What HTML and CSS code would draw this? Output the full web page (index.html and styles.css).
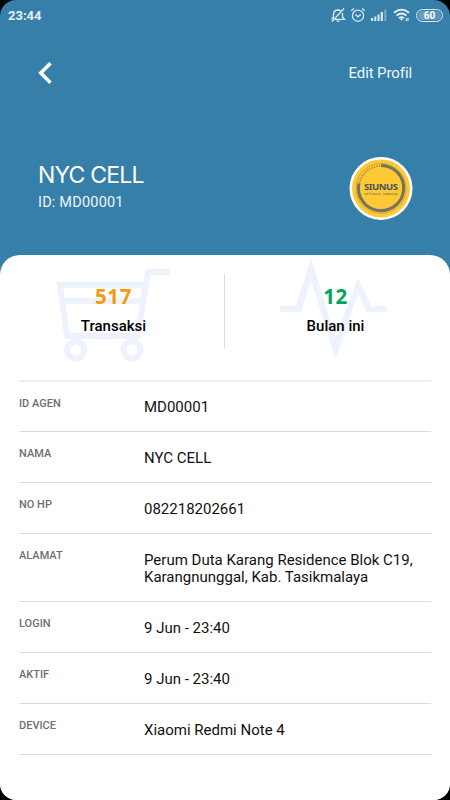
FILE: index.html
```html
<!DOCTYPE html>
<html lang="id">
<head>
  <meta charset="utf-8">
  <title>Profil</title>
  <link rel="stylesheet" href="styles.css">
</head>
<body>
  <div class="screen">
    <div class="header">
      <div class="statusbar">
        <span class="clock">23:44</span>
        <div class="status-icons">
          <svg class="bell" width="16" height="16" viewBox="0 0 16 16" fill="none" stroke="#dcebf4" stroke-width="1.3">
            <path d="M3.5 11.5 V7 Q3.7 3.2 8 3 Q9.5 3 10.7 4 M12.5 6 V10 L14.5 12.3 H5 M1.5 12.3 L3.5 10"/>
            <path d="M6.5 14.2 H9.5 M2 14.5 L14 1.5"/>
          </svg>
          <svg class="alarm" width="16" height="16" viewBox="0 0 16 16" fill="none" stroke="#dcebf4" stroke-width="1.3">
            <circle cx="8" cy="8.7" r="5.6"/>
            <path d="M5.3 7.5 L8 9.8 L10.8 7.5 M1.2 3.8 L4 1.6 M14.8 3.8 L12 1.6"/>
          </svg>
          <svg class="signal" width="16" height="14" viewBox="0 0 16 14">
            <path fill="#dcebf4" d="M0 10h2v3H0z M3.3 8.5h2V13h-2z M6.5 6.5h2V13h-2z M9.7 4h2.2v9H9.7z"/>
            <path fill="#79aac9" d="M13.3 1.5h2V13h-2z"/>
          </svg>
          <svg class="wifi" width="18" height="14" viewBox="0 0 18 14" fill="none" stroke="#e6f1f7" stroke-width="1.8">
            <path d="M1 4.8 Q8.5 -1.6 16 4.8 M3.5 7.6 Q8.5 3.4 13.5 7.6 M6 10.1 Q8.5 8.2 11 10.1"/>
            <path fill="#e6f1f7" stroke="none" d="M6.7 10.8 Q8.5 9.5 10.3 10.8 L8.5 12.8z"/>
            <path stroke-width="1" d="M13.3 10.2v3 M15 9.7v3.5"/>
          </svg>
          <span class="battery"><span>60</span></span>
        </div>
      </div>
      <div class="navbar">
        <svg width="16" height="24" viewBox="0 0 16 24" fill="none" stroke="#fff" stroke-width="3.6">
          <path d="M13.5 2.3 L3.8 12 L13.5 21.7"/>
        </svg>
        <span class="edit">Edit Profil</span>
      </div>
      <div class="profile">
        <div>
          <div class="name">NYC CELL</div>
          <div class="agent-id">ID: MD00001</div>
        </div>
        <svg class="avatar" width="64" height="64" viewBox="0 0 64 64">
          <circle cx="32" cy="32.4" r="31.5" fill="#fff"/>
          <circle cx="32" cy="32.4" r="29" fill="#ffc935"/>
          <circle cx="32" cy="32.4" r="25" fill="none" stroke="#ad984e" stroke-width=".7"/>
          <path d="M10.4 27 A22.2 22.2 0 0 1 32 9.8" fill="none" stroke="#8d8050" stroke-width="2" stroke-dasharray="1 1.5"/>
          <path d="M32 9.4 A22.6 22.6 0 1 1 9.9 27.5" fill="none" stroke="#77735a" stroke-width="3"/>
          <text class="logo-name" x="32" y="33.6" text-anchor="middle" textLength="34">SIUNUS</text>
          <text class="logo-sub" x="32" y="39.4" text-anchor="middle" textLength="34">Software Damasan</text>
        </svg>
      </div>
    </div>

    <div class="card">
      <div class="stats">
        <div class="stat">
          <svg class="stat-bg" width="114" height="94" viewBox="0 0 114 94" fill="none" stroke="#eef2fc" stroke-width="6">
            <path d="M114 4 H92 L81.5 68 H11 L4 17 H88 M6 33 H86"/>
            <circle cx="19.5" cy="82" r="8.5"/>
            <circle cx="76" cy="82" r="8.5"/>
          </svg>
          <div class="number orange">517</div>
          <div class="caption">Transaksi</div>
        </div>
        <div class="stat">
          <svg class="stat-bg pulse" width="107" height="102" viewBox="0 0 107 102">
            <path fill="#eef2fc" d="M0 48 H16 L31 0 L55.5 79 L78 20 L91 48 H106.500 V54 H86.500 L78 35 L55.500 101 L31 22 L21 54 H0z"/>
          </svg>
          <div class="number green">12</div>
          <div class="caption">Bulan ini</div>
        </div>
      </div>

      <div class="list">
        <div class="row">
          <div class="label">ID AGEN</div>
          <div class="value">MD00001</div>
        </div>
        <div class="row">
          <div class="label">NAMA</div>
          <div class="value">NYC CELL</div>
        </div>
        <div class="row">
          <div class="label">NO HP</div>
          <div class="value">082218202661</div>
        </div>
        <div class="row">
          <div class="label">ALAMAT</div>
          <div class="value">Perum Duta Karang Residence Blok C19,<br>Karangnunggal, Kab. Tasikmalaya</div>
        </div>
        <div class="row">
          <div class="label">LOGIN</div>
          <div class="value">9 Jun - 23:40</div>
        </div>
        <div class="row">
          <div class="label">AKTIF</div>
          <div class="value">9 Jun - 23:40</div>
        </div>
        <div class="row">
          <div class="label">DEVICE</div>
          <div class="value">Xiaomi Redmi Note 4</div>
        </div>
      </div>
    </div>
  </div>
</body>
</html>
```
FILE: styles.css
```css
* {
  box-sizing: border-box;
}

body {
  margin: 0;
  background: #000;
  font-family: Roboto, sans-serif;
}

.screen {
  width: 450px;
  height: 800px;
  background: #367fa9;
  border-radius: 16px;
  overflow: hidden;
  display: flex;
  flex-direction: column;
}

.header {
  height: 255px;
  color: #fff;
}

.statusbar {
  height: 30px;
  padding: 0 7px 0 8px;
  display: flex;
  align-items: center;
  justify-content: space-between;
}

.clock {
  font-size: 13px;
  font-weight: 700;
  color: #e6f1f7;
}

.status-icons {
  display: flex;
  align-items: center;
}

.alarm {
  margin-left: 4px;
}

.signal {
  margin-left: 5px;
}

.wifi {
  margin-left: 6px;
}

.battery {
  width: 27px;
  height: 13px;
  margin-left: 5px;
  padding: 1px;
  border: 1px solid #dcebf4;
  border-radius: 7px;
  font-size: 10px;
  font-weight: 700;
  line-height: 9px;
  text-align: center;
}

.battery span {
  display: block;
  border-radius: 5px;
  background: linear-gradient(to right, #67a0c0 60%, #5b97ba 60%);
}

.navbar {
  height: 86px;
  padding: 0 38px 0 37px;
  display: flex;
  align-items: center;
  justify-content: space-between;
}

.edit {
  font-size: 15px;
  letter-spacing: -0.1px;
  color: #eef6fa;
}

.profile {
  padding: 40px 37px 0 38px;
  display: flex;
  justify-content: space-between;
}

.name {
  margin-top: 5px;
  font-family: Inter, sans-serif;
  font-size: 23px;
  line-height: 28px;
  letter-spacing: -0.8px;
}

.agent-id {
  margin-top: 5px;
  font-size: 14.5px;
  line-height: 18px;
  letter-spacing: 0.2px;
  color: #eef6fa;
}

.logo-name {
  font-family: "Noto Sans", sans-serif;
  font-size: 9.5px;
  font-weight: 700;
  fill: #42515e;
}

.logo-sub {
  font-family: "Liberation Mono", monospace;
  font-size: 3.6px;
  fill: #5f604f;
}

.card {
  flex: 1;
  padding: 19px 19px 0;
  background: #fff;
  border-radius: 20px 20px 0 0;
}

.stats {
  height: 106px;
  display: flex;
}

.stat {
  position: relative;
  width: 205px;
  height: 75px;
  text-align: center;
  padding: 8px 16px 0 0;
}

.stat + .stat {
  width: 207px;
  border-left: 1px solid #ddd;
  padding: 8px 0 0 15px;
}

/* pale artwork behind the numbers */
.stat-bg {
  position: absolute;
  left: 37px;
  top: -6px;
}

.pulse {
  left: 55px;
  top: -16px;
}

.number {
  position: relative;
  font-family: "Noto Sans", sans-serif;
  font-size: 20.5px;
  font-weight: 700;
  line-height: 28px;
  letter-spacing: 0.6px;
}

.orange {
  color: #f39c12;
}

.green {
  color: #00a65a;
}

.caption {
  position: relative;
  margin-top: 7px;
  font-size: 15px;
  font-weight: 500;
  line-height: 18px;
  color: #000;
}

.list {
  border-top: 2px solid #eee;
}

.row {
  display: flex;
  padding: 18px 0 15px;
  border-bottom: 1px solid #ddd;
}

.row:first-child {
  padding-top: 17px;
}

.label {
  width: 125px;
  height: 14px;
  margin-top: -4px;
  font-size: 11px;
  font-weight: 500;
  line-height: 15px;
  color: #6f6f6f;
}

.row:first-child .label {
  margin-top: -3px;
}

.value {
  font-size: 15px;
  line-height: 17px;
  color: #111;
  white-space: nowrap;
}
```
